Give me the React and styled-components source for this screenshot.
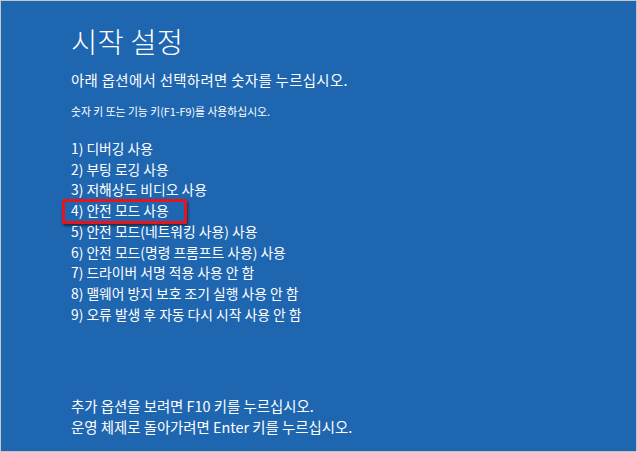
import styled, { createGlobalStyle } from 'styled-components';

const GlobalStyle = createGlobalStyle`
  html, body {
    margin: 0;
    padding: 0;
    background: #ffffff;
  }
  * {
    box-sizing: border-box;
  }
`;

const Screen = styled.div`
  width: 637px;
  height: 452px;
  display: flex;
  flex-direction: column;
  padding: 22px 0 14px 70px;
  background: #1f66b1;
  border: 1px solid #c6c6c6;
  color: #ffffff;
  font-family: "Noto Sans CJK KR", "Noto Sans", sans-serif;
`;

const Title = styled.h1`
  margin: 0;
  font-size: 28.5px;
  font-weight: 300;
  line-height: 36px;
  letter-spacing: 0.2px;
`;

const Subtitle = styled.p`
  margin: 11px 0 0;
  font-size: 14.4px;
  line-height: 20px;
  letter-spacing: 0.35px;
`;

const Hint = styled.p`
  margin: 13px 0 0;
  font-size: 10.8px;
  line-height: 16px;
`;

const OptionList = styled.ol`
  list-style: none;
  margin: 19px 0 0;
  padding: 0;
`;

const Option = styled.li`
  font-size: 13.8px;
  line-height: 20.7px;
`;

const OptionText = styled.span`
  position: relative;

  ${({ $highlighted }) =>
    $highlighted &&
    `
    &::after {
      content: '';
      position: absolute;
      left: -9px;
      right: -18px;
      top: -1px;
      bottom: -4px;
      border: 3px solid #e8141c;
      border-radius: 2px;
      box-shadow: 1px 2px 3px rgba(0, 0, 0, 0.55);
    }
  `}
`;

const Footer = styled.div`
  margin-top: auto;
`;

const FooterLine = styled.p`
  margin: 0;
  font-size: 14.4px;
  line-height: 21px;
`;

const options = [
  '1) 디버깅 사용',
  '2) 부팅 로깅 사용',
  '3) 저해상도 비디오 사용',
  '4) 안전 모드 사용',
  '5) 안전 모드(네트워킹 사용) 사용',
  '6) 안전 모드(명령 프롬프트 사용) 사용',
  '7) 드라이버 서명 적용 사용 안 함',
  '8) 맬웨어 방지 보호 조기 실행 사용 안 함',
  '9) 오류 발생 후 자동 다시 시작 사용 안 함',
];

export default function App() {
  return (
    <>
      <GlobalStyle />
      <Screen>
        <Title>시작 설정</Title>
        <Subtitle>아래 옵션에서 선택하려면 숫자를 누르십시오.</Subtitle>
        <Hint>숫자 키 또는 기능 키(F1-F9)를 사용하십시오.</Hint>
        <OptionList>
          {options.map((label, i) => (
            <Option key={label}>
              <OptionText $highlighted={i === 3}>{label}</OptionText>
            </Option>
          ))}
        </OptionList>
        <Footer>
          <FooterLine>추가 옵션을 보려면 F10 키를 누르십시오.</FooterLine>
          <FooterLine>운영 체제로 돌아가려면 Enter 키를 누르십시오.</FooterLine>
        </Footer>
      </Screen>
    </>
  );
}
